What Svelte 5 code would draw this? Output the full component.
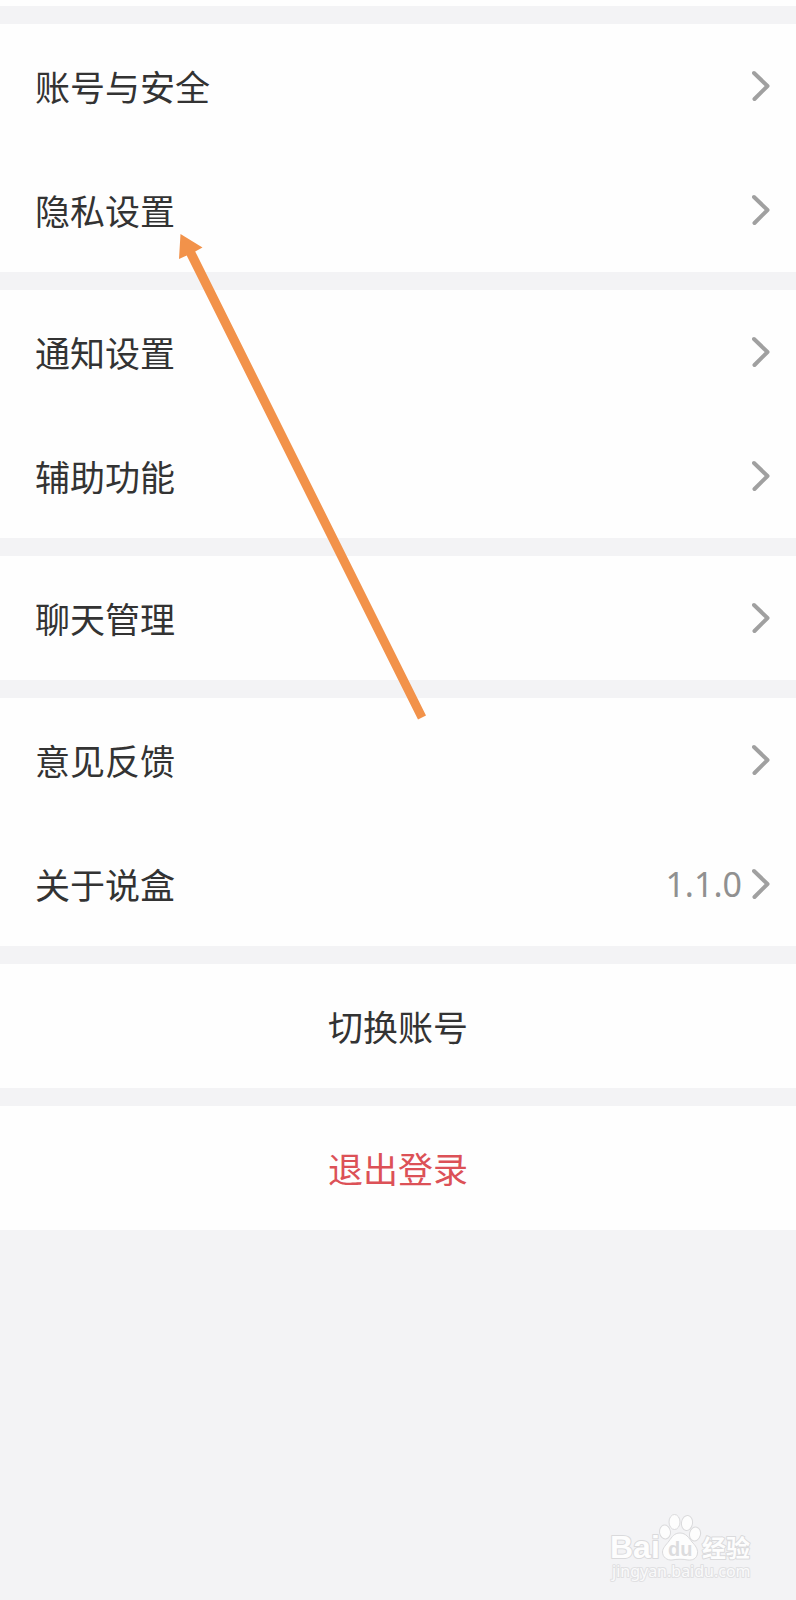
<script>
  const groups = [
    [{ label: '账号与安全' }, { label: '隐私设置' }],
    [{ label: '通知设置' }, { label: '辅助功能' }],
    [{ label: '聊天管理' }],
    [{ label: '意见反馈' }, { label: '关于说盒', value: '1.1.0' }],
  ];
</script>

<main>
  <div class="header-edge"></div>

  {#each groups as group}
    <nav class="card">
      {#each group as item}
        <button class="row" type="button">
          <span class="label">{item.label}</span>
          {#if item.value}<span class="value">{item.value}</span>{/if}
          <svg class="chevron" viewBox="0 0 18 32" aria-hidden="true">
            <path d="M2 3 L15.500 16 L2.500 29" />
          </svg>
        </button>
      {/each}
    </nav>
  {/each}

  <div class="card"><button class="row action" type="button">切换账号</button></div>
  <div class="card"><button class="row action danger" type="button">退出登录</button></div>

  <svg class="arrow" viewBox="0 0 250 488" aria-hidden="true">
    <path d="M4.500 2 L26.500 15.500 L19.200 19.400 L250 483.500 L242 487.500 L10.700 23.600 L3 27 Z" />
  </svg>

  <svg class="watermark" viewBox="0 0 150 76" role="img" aria-label="Baidu 经验">
    <g class="mark">
      <text class="brand" x="4" y="46">Bai</text>
      <ellipse cx="59" cy="20" rx="5.500" ry="7" transform="rotate(-8 59 20)" />
      <ellipse cx="68.500" cy="10" rx="5.500" ry="7.500" />
      <ellipse cx="81" cy="11" rx="5.500" ry="7.500" transform="rotate(8 81 11)" />
      <ellipse cx="89" cy="22" rx="5.500" ry="7" transform="rotate(15 89 22)" />
      <path d="M74 21 C80 21 83 26 86 30 C89 33 92 37 91.500 41 C91 47 86 48.500 82 48 C77 47 71 47 66 48 C61 48.500 56.500 45 56.500 40 C56.500 36 60 33 63 29 C66 25 68 21 74 21 Z" />
      <text class="du" x="62" y="44">du</text>
      <text class="cn" x="96" y="45">经验</text>
    </g>
    <text class="url" x="6" y="65">jingyan.baidu.com</text>
  </svg>
</main>

<style>
  :global(body) {
    background: #f3f3f5;
  }

  main {
    position: relative;
    display: flex;
    flex-direction: column;
    gap: 18px;
    min-height: 100vh;
    overflow: hidden;
    background: #f3f3f5;
    color: #333;
    font-family: 'Noto Sans CJK SC', sans-serif;
  }

  .header-edge {
    height: 6px;
    background: #fefefe;
  }

  .card {
    background: #fefefe;
  }

  .row {
    display: flex;
    align-items: center;
    box-sizing: border-box;
    width: 100%;
    height: 124px;
    padding: 0 26px 0 35px;
    border: 0;
    background: none;
    color: inherit;
    font: inherit;
    font-size: 35px;
    line-height: 52px;
    text-align: left;
    cursor: pointer;
  }

  .label {
    flex: 1;
  }

  .value {
    margin-right: 10px;
    color: #909090;
    font-family: 'Noto Sans', sans-serif;
    font-size: 34px;
  }

  .chevron {
    width: 18px;
    height: 32px;
    fill: none;
    stroke: #a0a0a0;
    stroke-width: 4;
    stroke-linecap: round;
    stroke-linejoin: round;
  }

  .action {
    justify-content: center;
    padding: 0 26px;
  }

  .danger {
    color: #dc5157;
  }

  .arrow {
    position: absolute;
    top: 232px;
    left: 176px;
    width: 250px;
    height: 488px;
    fill: #f2924a;
    pointer-events: none;
  }

  .watermark {
    position: absolute;
    right: 40px;
    bottom: 12px;
    width: 150px;
    height: 76px;
    pointer-events: none;
  }

  .mark {
    fill: #fdfdfd;
    stroke: #dadadc;
    stroke-width: 1;
  }

  .watermark text {
    paint-order: stroke;
    stroke-width: 2;
    stroke-linejoin: round;
  }

  .brand {
    font: 700 32px 'Liberation Sans', sans-serif;
  }

  .watermark .du {
    fill: #dcdcde;
    stroke: none;
    font: 700 20px 'Liberation Sans', sans-serif;
  }

  .cn {
    font: 700 24px 'Noto Sans CJK SC', sans-serif;
  }

  .url {
    fill: #fafafb;
    stroke: #e0e0e2;
    font: 400 16px 'Noto Sans', sans-serif;
  }
</style>
